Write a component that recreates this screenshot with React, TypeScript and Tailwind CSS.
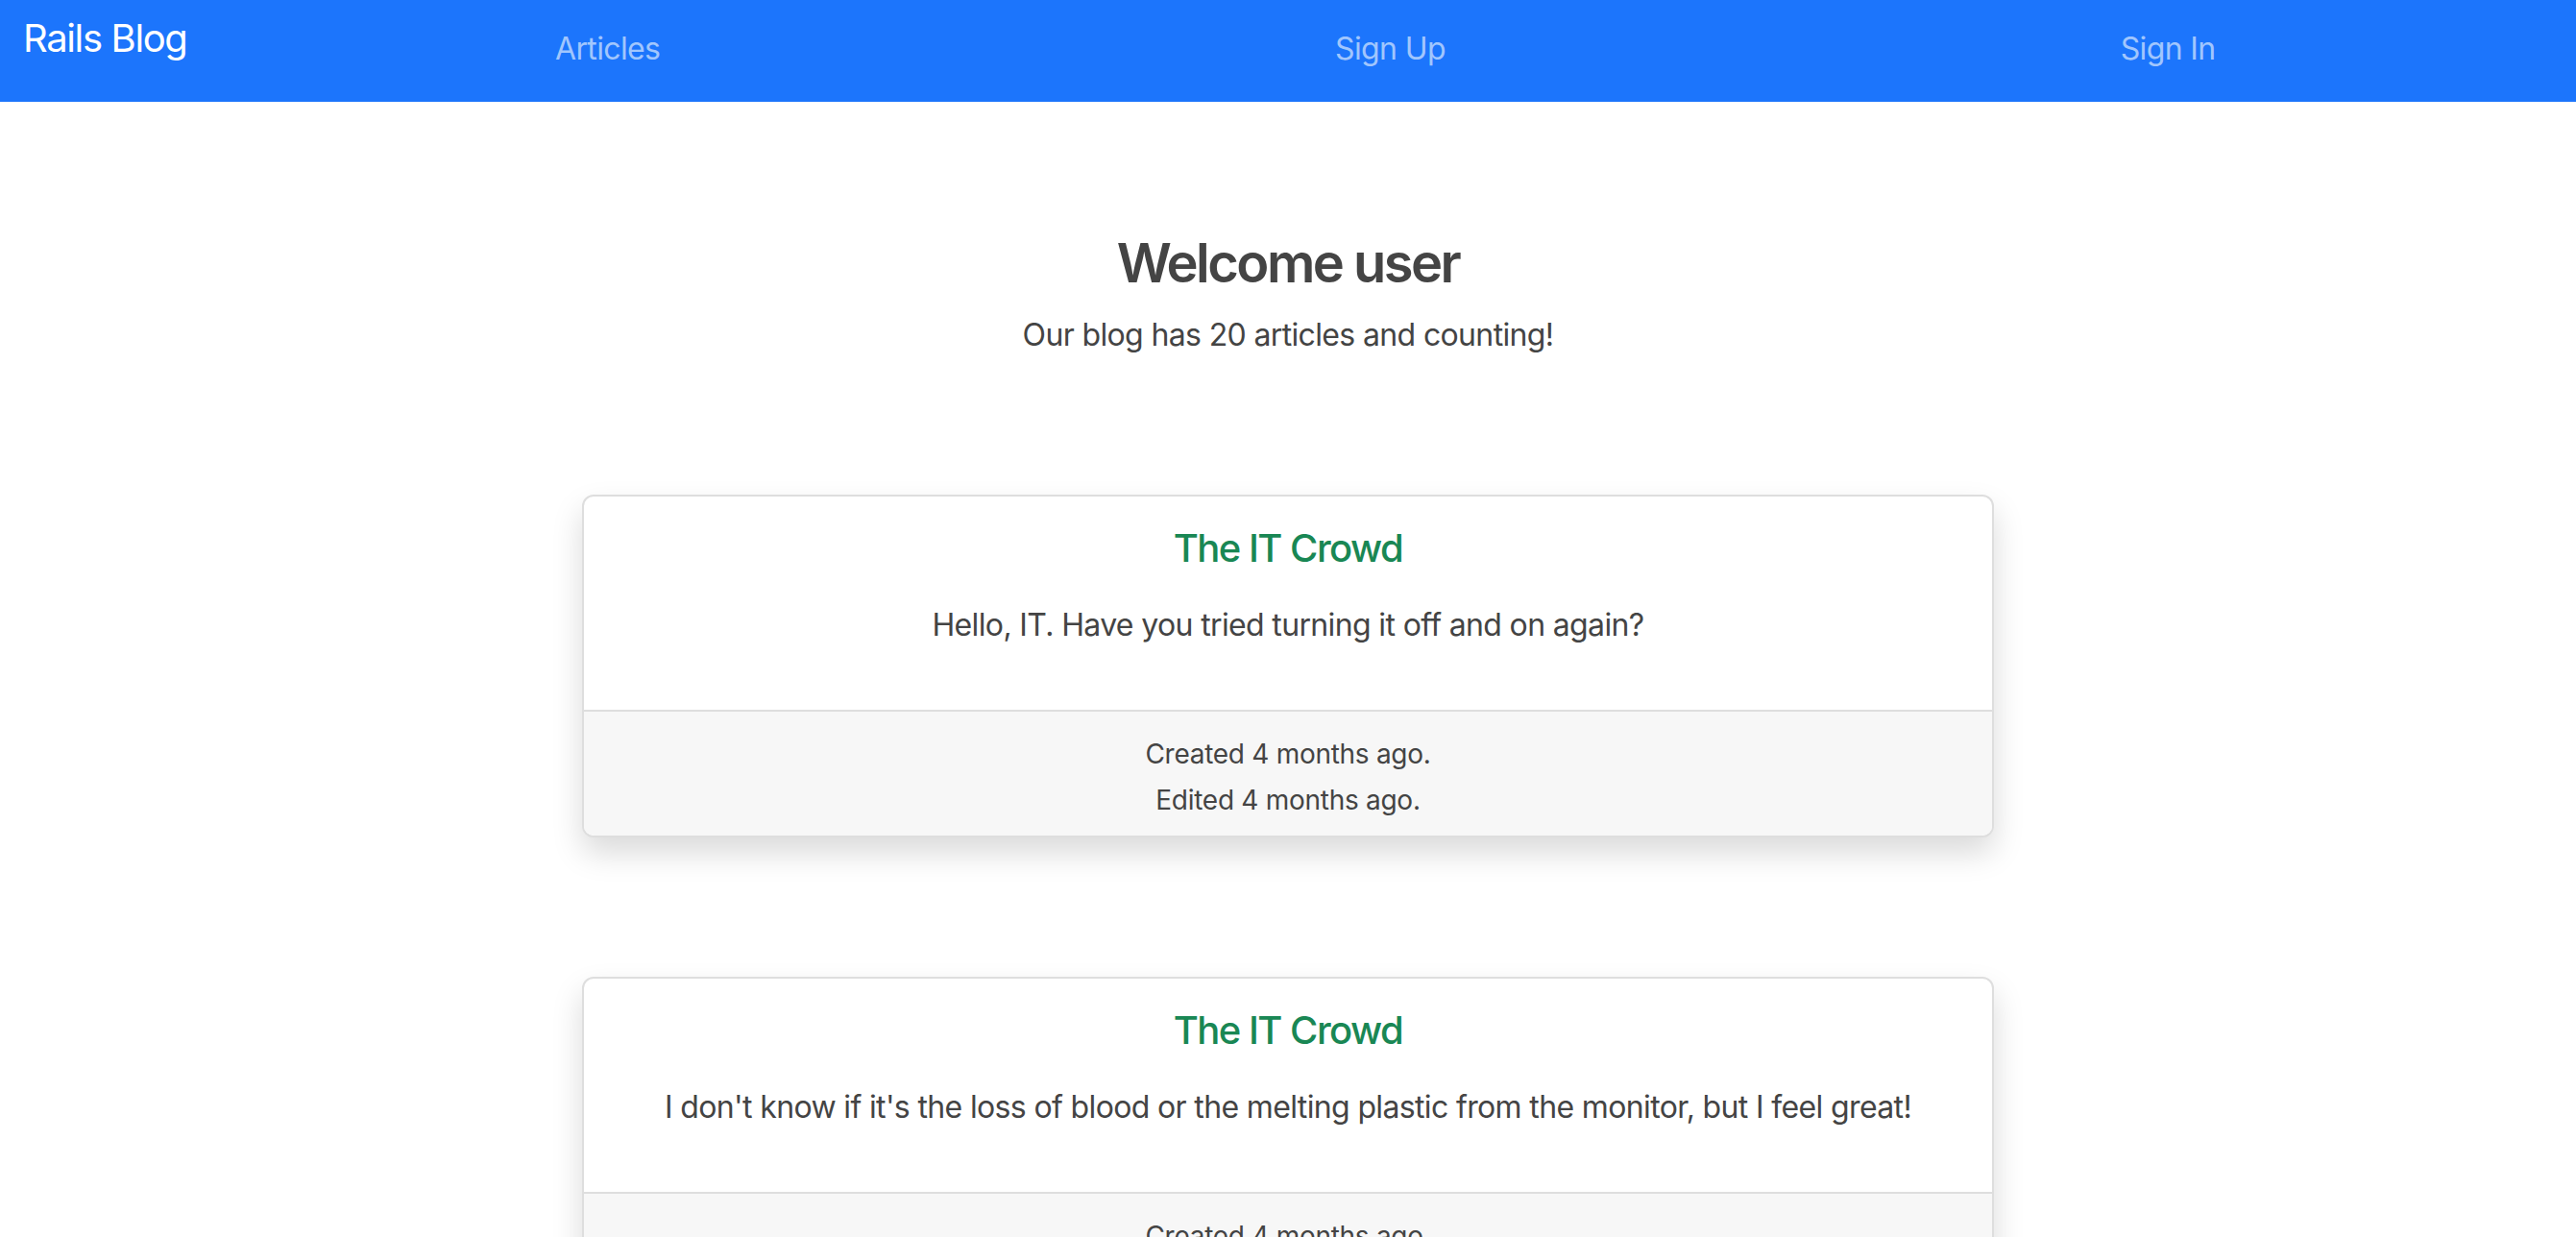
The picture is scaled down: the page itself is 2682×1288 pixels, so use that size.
import React from 'react'

const articles = [
  {
    id: 1,
    title: 'The IT Crowd',
    body: 'Hello, IT. Have you tried turning it off and on again?',
    created: '4 months ago',
    edited: '4 months ago',
  },
  {
    id: 2,
    title: 'The IT Crowd',
    body: "I don't know if it's the loss of blood or the melting plastic from the monitor, but I feel great!",
    created: '4 months ago',
    edited: '4 months ago',
  },
  {
    id: 3,
    title: 'The IT Crowd',
    body: 'Did you see that ludicrous display last night?',
    created: '4 months ago',
    edited: '4 months ago',
  },
]

const links = ['Articles', 'Sign Up', 'Sign In']

const Navbar = () => {
  return (
    <nav className="flex h-[106px] items-start bg-[#1c75fc] px-[24px]">
      <a href="#" className="mt-[10px] mr-[32px] text-[40px] leading-[60px] tracking-[-0.034em] text-white">
        Rails Blog
      </a>
      <ul className="flex flex-1 justify-around">
        {links.map((link) => (
          <li key={link}>
            <a href="#" className="mt-[27px] block text-[32px] leading-[48px] tracking-[-0.02em] text-[#a1c6fd]">
              {link}
            </a>
          </li>
        ))}
      </ul>
    </nav>
  )
}

const ArticleCard = ({ article }: { article: (typeof articles)[number] }) => {
  return (
    <div className="w-[1470px] rounded-[12px] border-2 border-[#dedede] bg-white text-center shadow-[0_16px_32px_rgba(0,0,0,0.15)]">
      <div className="px-[32px] pt-[30px] pb-[64px]">
        <h5 className="text-[40px] leading-[48px] font-medium tracking-[-0.038em] text-[#198754]">{article.title}</h5>
        <p className="mt-[32px] text-[32px] leading-[48px] tracking-[-0.02em]">{article.body}</p>
      </div>
      <div className="rounded-b-[10px] border-t-2 border-[#dedede] bg-[#f7f7f7] pt-[20px] pb-[13px] text-[28px] leading-[48px] tracking-[-0.01em]">
        <p>Created {article.created}.</p>
        <p>Edited {article.edited}.</p>
      </div>
    </div>
  )
}

export default function App() {
  return (
    <div className="min-h-screen bg-white font-['Inter',sans-serif] text-[#444]">
      <Navbar />
      <main className="flex flex-col items-center pt-[135px] pb-[200px]">
        <h1 className="text-[56px] leading-[67px] font-semibold tracking-[-0.045em]">Welcome user</h1>
        <p className="mt-[17px] text-[32px] leading-[48px] tracking-[-0.02em]">Our blog has 20 articles and counting!</p>
        <div className="mt-[142px] flex flex-col items-center gap-[145px]">
          {articles.map((article) => (
            <ArticleCard key={article.id} article={article} />
          ))}
        </div>
      </main>
    </div>
  )
}
